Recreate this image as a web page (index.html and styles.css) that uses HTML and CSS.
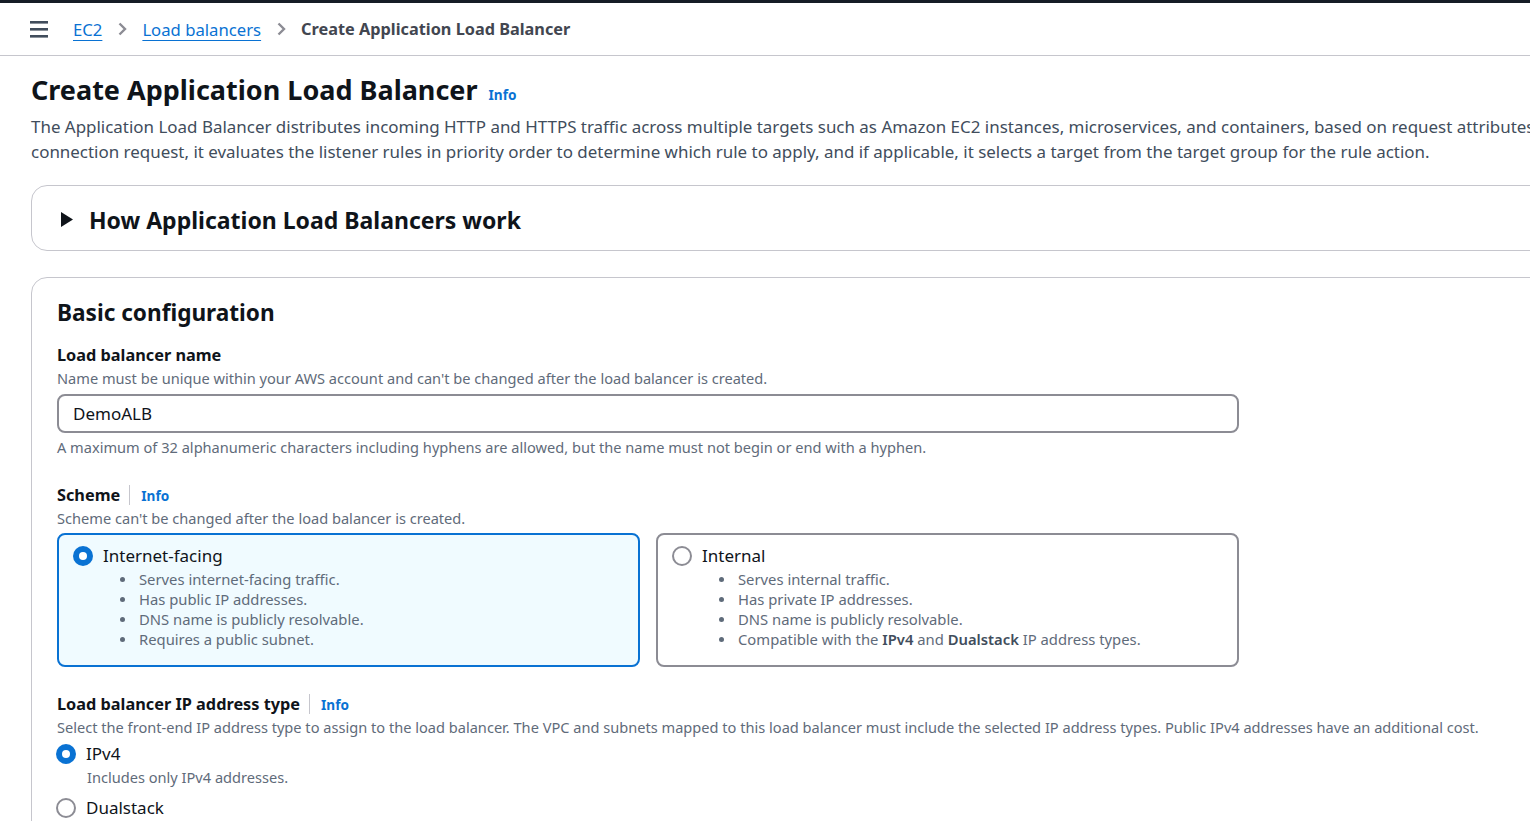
FILE: index.html
```html
<!DOCTYPE html>
<html lang="en">
<head>
<meta charset="utf-8">
<title>Create Application Load Balancer</title>
<link rel="stylesheet" href="styles.css">
</head>
<body>
<div class="topbar"></div>
<nav class="crumbs">
  <svg class="menu" width="18" height="17" viewBox="0 0 18 17"><rect x="0" y="0" width="18" height="2.6" fill="#414d5c"/><rect x="0" y="7" width="18" height="2.6" fill="#414d5c"/><rect x="0" y="14" width="18" height="2.6" fill="#414d5c"/></svg>
  <a class="crumb-link" href="#">EC2</a>
  <svg class="chev" width="9" height="14" viewBox="0 0 9 14"><path d="M1.5 1.5 L7 7 L1.5 12.5" fill="none" stroke="#8c8c94" stroke-width="2.4"/></svg>
  <a class="crumb-link" href="#">Load balancers</a>
  <svg class="chev" width="9" height="14" viewBox="0 0 9 14"><path d="M1.5 1.5 L7 7 L1.5 12.5" fill="none" stroke="#8c8c94" stroke-width="2.4"/></svg>
  <span class="crumb-current">Create Application Load Balancer</span>
</nav>
<main class="page">
  <div class="title-row">
    <h1>Create Application Load Balancer</h1>
    <a class="info" href="#">Info</a>
  </div>
  <p class="lead">The Application Load Balancer distributes incoming HTTP and HTTPS traffic across multiple targets such as Amazon EC2 instances, microservices, and containers, based on request attributes. When the load balancer receives a connection request, it evaluates the listener rules in priority order to determine which rule to apply, and if applicable, it selects a target from the target group for the rule action.</p>

  <section class="expander">
    <svg class="caret" width="12" height="15" viewBox="0 0 12 15"><polygon points="0,0 12,7.5 0,15" fill="#0f141a"/></svg>
    <h2 class="section-title">How Application Load Balancers work</h2>
  </section>

  <section class="panel">
    <h2 class="section-title panel-title">Basic configuration</h2>

    <div class="field first">
      <div class="label-row"><span class="label">Load balancer name</span></div>
      <div class="desc">Name must be unique within your AWS account and can't be changed after the load balancer is created.</div>
      <div class="input">DemoALB</div>
      <div class="constraint">A maximum of 32 alphanumeric characters including hyphens are allowed, but the name must not begin or end with a hyphen.</div>
    </div>

    <div class="field">
      <div class="label-row"><span class="label">Scheme</span><span class="divider"></span><a class="info" href="#">Info</a></div>
      <div class="desc">Scheme can't be changed after the load balancer is created.</div>
      <div class="tiles">
        <div class="tile selected">
          <div class="tile-head">
            <svg class="radio" width="20" height="20" viewBox="0 0 20 20"><circle cx="10" cy="10" r="10" fill="#0972d3"/><circle cx="10" cy="10" r="4" fill="#ffffff"/></svg>
            <span class="tile-label">Internet-facing</span>
          </div>
          <ul class="bullets">
            <li>Serves internet-facing traffic.</li>
            <li>Has public IP addresses.</li>
            <li>DNS name is publicly resolvable.</li>
            <li>Requires a public subnet.</li>
          </ul>
        </div>
        <div class="tile">
          <div class="tile-head">
            <svg class="radio" width="20" height="20" viewBox="0 0 20 20"><circle cx="10" cy="10" r="9" fill="#ffffff" stroke="#8c8c94" stroke-width="2"/></svg>
            <span class="tile-label">Internal</span>
          </div>
          <ul class="bullets">
            <li>Serves internal traffic.</li>
            <li>Has private IP addresses.</li>
            <li>DNS name is publicly resolvable.</li>
            <li>Compatible with the <b>IPv4</b> and <b>Dualstack</b> IP address types.</li>
          </ul>
        </div>
      </div>
    </div>

    <div class="field ip">
      <div class="label-row"><span class="label">Load balancer IP address type</span><span class="divider"></span><a class="info" href="#">Info</a></div>
      <div class="desc">Select the front-end IP address type to assign to the load balancer. The VPC and subnets mapped to this load balancer must include the selected IP address types. Public IPv4 addresses have an additional cost.</div>
      <div class="option">
        <div class="option-head">
          <svg class="radio" width="20" height="20" viewBox="0 0 20 20"><circle cx="10" cy="10" r="10" fill="#0972d3"/><circle cx="10" cy="10" r="4" fill="#ffffff"/></svg>
          <span class="tile-label">IPv4</span>
        </div>
        <div class="option-desc">Includes only IPv4 addresses.</div>
      </div>
      <div class="option second">
        <div class="option-head">
          <svg class="radio" width="20" height="20" viewBox="0 0 20 20"><circle cx="10" cy="10" r="9" fill="#ffffff" stroke="#8c8c94" stroke-width="2"/></svg>
          <span class="tile-label">Dualstack</span>
        </div>
      </div>
    </div>
  </section>
</main>
</body>
</html>
```

FILE: styles.css
```css
html, body {
  margin: 0;
  padding: 0;
  background: #ffffff;
  overflow: hidden;
}
body {
  font-family: "Noto Sans", "Open Sans", sans-serif;
  color: #0f141a;
  width: 1530px;
  height: 821px;
}
.topbar {
  height: 3px;
  background: #161d26;
}
.crumbs {
  height: 52px;
  border-bottom: 1px solid #c6c6cd;
  display: flex;
  align-items: center;
  padding-left: 30px;
  font-size: 16.7px;
}
.menu {
  display: block;
  margin-top: 1px;
}
.crumb-link {
  color: #0972d3;
  text-decoration: underline;
  text-underline-offset: 4px;
  text-decoration-thickness: 1px;
}
.crumb-link:first-of-type {
  margin-left: 25px;
}
.chev {
  display: block;
  margin: 0 15px 0 16px;
}
.crumb-current {
  color: #424650;
  font-weight: 700;
  font-size: 16.3px;
}
.page {
  width: 1830px;
  padding: 16px 0 0 31px;
}
.title-row {
  display: flex;
  align-items: baseline;
}
h1 {
  margin: 0;
  font-size: 27px;
  line-height: 36px;
  font-weight: 700;
  color: #0f141a;
}
.info {
  color: #0972d3;
  font-weight: 700;
  font-size: 13.6px;
  text-decoration: none;
}
.title-row .info {
  margin-left: 11px;
}
.lead {
  margin: 6px 0 0;
  font-size: 16.95px;
  line-height: 25px;
  color: #414d5c;
}
.expander {
  margin-top: 21px;
  height: 64px;
  border: 1px solid #c6c6cd;
  border-radius: 16px;
  display: flex;
  align-items: center;
  padding-left: 29px;
}
.caret {
  display: block;
  margin-right: 16px;
  margin-top: 2px;
}
.section-title {
  margin: 0;
  font-size: 23px;
  line-height: 30px;
  font-weight: 700;
  color: #0f141a;
}
.expander .section-title {
  margin-top: 3px;
}
.panel-title {
  font-size: 22.6px;
}
.panel {
  margin-top: 26px;
  border: 1px solid #c6c6cd;
  border-radius: 16px;
  padding: 20px 25px 40px;
  min-height: 600px;
}
.field {
  margin-top: 27px;
}
.field.first {
  margin-top: 16px;
}
.field.ip {
  margin-top: 26px;
}
.label-row {
  display: flex;
  align-items: center;
  height: 22px;
}
.label {
  font-size: 16.3px;
  line-height: 22px;
  font-weight: 700;
  color: #0f141a;
}
.divider {
  width: 1px;
  height: 20px;
  background: #c6c6cd;
  margin: 0 11px 0 9px;
}
.desc {
  margin-top: 2px;
  font-size: 14.6px;
  line-height: 20px;
  color: #5f6b7a;
}
.input {
  margin-top: 6px;
  width: 1182px;
  box-sizing: border-box;
  height: 39px;
  border: 2px solid #8c8c94;
  border-radius: 8px;
  padding: 0 14px;
  display: flex;
  align-items: center;
  font-size: 17px;
  line-height: 22px;
  color: #0f141a;
}
.constraint {
  margin-top: 4px;
  font-size: 14.6px;
  line-height: 20px;
  color: #5f6b7a;
}
.tiles {
  margin-top: 5px;
  width: 1182px;
  display: grid;
  grid-template-columns: 1fr 1fr;
  gap: 16px;
}
.tile {
  border: 2px solid #8c8c94;
  border-radius: 8px;
  padding: 10px 14px 16px;
  background: #ffffff;
}
.tile.selected {
  border-color: #0972d3;
  background: #f0fbff;
}
.tile-head, .option-head {
  display: flex;
  align-items: center;
  gap: 10px;
  height: 22px;
}
.radio {
  display: block;
  flex: none;
}
.option-head .radio {
  margin-left: -1px;
}
.tile-label {
  font-size: 17px;
  line-height: 22px;
  color: #0f141a;
}
.bullets {
  list-style: none;
  margin: 2px 0 0;
  padding-left: 66px;
  font-size: 14.8px;
  line-height: 20px;
  color: #5f6b7a;
}
.bullets li::before {
  content: "";
  display: inline-block;
  width: 5px;
  height: 5px;
  border-radius: 50%;
  background: #5f6b7a;
  margin: 0 14px 0 -19px;
  vertical-align: 3px;
}
.bullets b {
  font-weight: 600;
  color: #414d5c;
}
.option {
  margin-top: 6px;
}
.option.second {
  margin-top: 10px;
}
.option-desc {
  margin-top: 2px;
  padding-left: 30px;
  font-size: 14.6px;
  line-height: 20px;
  color: #5f6b7a;
}
```
